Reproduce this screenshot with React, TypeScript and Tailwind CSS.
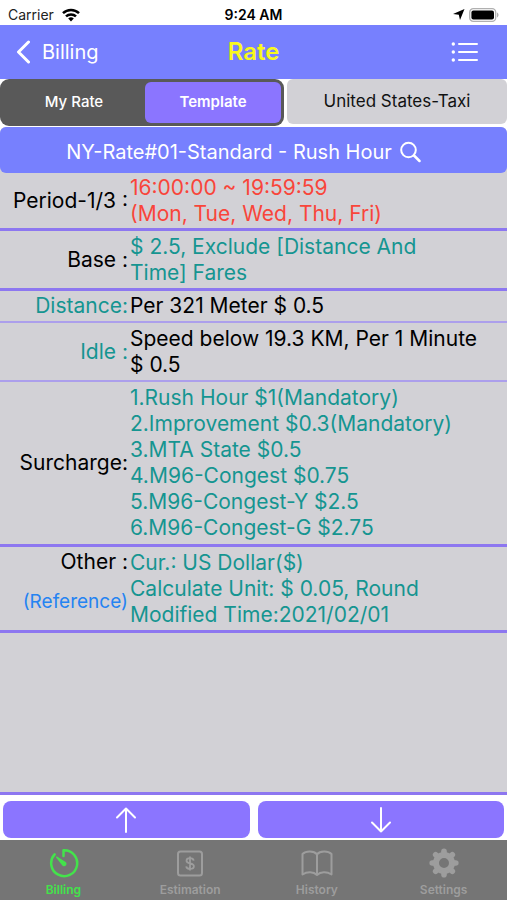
import React, { ReactNode } from "react";

type RateRow = {
  label: string;
  labelColor?: string;
  lines: string[];
  color: string;
  height: string;
  border: string;
  link?: string;
};

const STRONG_LINE = "border-b-[3px] border-[#8d77f0]";
const LIGHT_LINE = "border-b-2 border-[#ac9fec]";

const rows: RateRow[] = [
  {
    label: "Period-1/3 :",
    lines: ["16:00:00 ~ 19:59:59", "(Mon, Tue, Wed, Thu, Fri)"],
    color: "text-[#f9453a]",
    height: "h-[58px]",
    border: STRONG_LINE,
  },
  {
    label: "Base :",
    lines: ["$ 2.5, Exclude [Distance And", "Time] Fares"],
    color: "text-[#159591]",
    height: "h-[60px]",
    border: STRONG_LINE,
  },
  {
    label: "Distance:",
    labelColor: "text-[#159591]",
    lines: ["Per 321 Meter $ 0.5"],
    color: "text-black",
    height: "h-[32px]",
    border: LIGHT_LINE,
  },
  {
    label: "Idle :",
    labelColor: "text-[#159591]",
    lines: ["Speed below 19.3 KM, Per 1 Minute", "$ 0.5"],
    color: "text-black",
    height: "h-[59px]",
    border: LIGHT_LINE,
  },
  {
    label: "Surcharge:",
    lines: [
      "1.Rush Hour $1(Mandatory)",
      "2.Improvement $0.3(Mandatory)",
      "3.MTA State $0.5",
      "4.M96-Congest $0.75",
      "5.M96-Congest-Y $2.5",
      "6.M96-Congest-G $2.75",
    ],
    color: "text-[#159591]",
    height: "h-[165px]",
    border: STRONG_LINE,
  },
  {
    label: "Other :",
    lines: ["Cur.: US Dollar($)", "Calculate Unit: $ 0.05, Round", "Modified Time:2021/02/01"],
    color: "text-[#159591]",
    height: "h-[86px]",
    border: STRONG_LINE,
    link: "(Reference)",
  },
];

function StatusBar() {
  return (
    <div className="grid h-[25px] grid-cols-3 items-center bg-white px-2 pt-1 text-sm text-black">
      <div className="flex items-center gap-2 text-[#222]">
        Carrier
        <svg width="18" height="14" viewBox="0 0 18 14" aria-hidden="true">
          <g fill="none" stroke="#000" strokeWidth="2.5">
            <path d="M1 5.2a11.4 11.4 0 0 1 16 0" />
            <path d="M4 8.4a7.2 7.2 0 0 1 10 0" />
          </g>
          <path d="M9 13.4 6.2 10.6a4 4 0 0 1 5.6 0Z" />
        </svg>
      </div>
      <div className="text-center font-semibold">9:24 AM</div>
      <div className="flex items-center justify-end gap-1">
        <svg width="12" height="11" viewBox="0 0 12 11" aria-hidden="true">
          <path d="M11.500 0 7 11 5.800 5.800 0 5Z" />
        </svg>
        <svg width="30" height="14" viewBox="0 0 30 14" aria-hidden="true">
          <rect x=".7" y=".7" width="26" height="12.6" rx="3.6" fill="#fff" stroke="#b0b0b0" strokeWidth="1.3" />
          <rect x="2.4" y="2.4" width="22.6" height="9.2" rx="2" />
          <path d="M28 4.6c2 .7 2 4.1 0 4.8Z" fill="#b0b0b0" />
        </svg>
      </div>
    </div>
  );
}

function NavBar() {
  return (
    <header className="grid h-[54px] grid-cols-3 items-center bg-[#7780fe] text-white">
      <button type="button" className="flex items-center gap-3 pl-4 text-xl">
        <svg width="14" height="24" viewBox="0 0 14 24" fill="none" stroke="currentColor" strokeWidth="3" strokeLinecap="round" strokeLinejoin="round" aria-hidden="true">
          <path d="M12.5 2 2.5 12l10 10" />
        </svg>
        Billing
      </button>
      <h1 className="text-center text-2xl font-semibold text-[#f8f81c]">Rate</h1>
      <button type="button" aria-label="Rate list" className="justify-self-end pr-7">
        <svg width="28" height="20" viewBox="0 0 28 20" fill="none" stroke="currentColor" strokeWidth="2" strokeLinecap="round" aria-hidden="true">
          <path d="M8 2h18M8 10h18M8 18h18" />
          <path d="M2.3 2h.01M2.3 10h.01M2.3 18h.01" strokeWidth="3.4" />
        </svg>
      </button>
    </header>
  );
}

function RateFilter() {
  return (
    <div className="grid grid-cols-[284fr_220fr] gap-[3px] pb-px">
      <div className="grid h-[47px] grid-cols-[142fr_136fr] rounded-[9px] bg-[#595959] p-[3px] text-[15px] font-medium text-white">
        <button type="button">My Rate</button>
        <button type="button" className="rounded-md bg-[#8b75ff] font-semibold">
          Template
        </button>
      </div>
      <button type="button" className="h-[45px] rounded-md bg-[#d2d1d6] text-[17px] text-[#111]">
        United States-Taxi
      </button>
    </div>
  );
}

function RateTable() {
  return (
    <table className="w-full border-separate border-spacing-0 text-[21px] leading-[26px]">
      <tbody>
        {rows.map((row) => (
          <tr key={row.label} className={row.height}>
            <th
              scope="row"
              className={`w-[128px] p-0 text-right font-normal whitespace-nowrap ${row.link ? "pt-[2px] align-top" : "align-middle"} ${row.labelColor ?? "text-black"} ${row.border}`}
            >
              {row.label}
              {row.link && (
                <a href="#reference" className="mt-[14px] block text-[19px] text-[#2583f2]">
                  {row.link}
                </a>
              )}
            </th>
            <td className={`py-0 pr-0 pl-[2px] ${row.color} ${row.border}`}>
              {row.lines.map((line) => (
                <div key={line}>{line}</div>
              ))}
            </td>
          </tr>
        ))}
      </tbody>
    </table>
  );
}

function Pager() {
  const button = "flex h-[37px] items-center justify-center rounded-lg bg-[#8b75ff] text-white";
  return (
    <div className="grid grid-cols-2 gap-2 px-[3px] pt-[6px] pb-[2px]">
      <button type="button" aria-label="Previous rate" className={button}>
        <svg width="22" height="26" viewBox="0 0 22 26" fill="none" stroke="currentColor" strokeWidth="2" strokeLinecap="round" strokeLinejoin="round" aria-hidden="true">
          <path d="M11 25V1.5M2 10.5l9-9 9 9" />
        </svg>
      </button>
      <button type="button" aria-label="Next rate" className={button}>
        <svg width="22" height="26" viewBox="0 0 22 26" fill="none" stroke="currentColor" strokeWidth="2" strokeLinecap="round" strokeLinejoin="round" aria-hidden="true">
          <path d="M11 1v23.5M2 15.5l9 9 9-9" />
        </svg>
      </button>
    </div>
  );
}

function TabItem({ label, active, children }: { label: string; active?: boolean; children: ReactNode }) {
  return (
    <a
      href={`#${label.toLowerCase()}`}
      className={`flex flex-col items-center gap-1 pt-2 text-xs font-semibold ${active ? "text-[#43e34b]" : "text-[#9d9d9d]"}`}
    >
      <svg width="32" height="30" viewBox="0 0 32 30" fill="none" stroke="currentColor" strokeWidth="2" aria-hidden="true">
        {children}
      </svg>
      {label}
    </a>
  );
}

function TabBar() {
  const teeth = [0, 45, 90, 135, 180, 225, 270, 315];
  return (
    <nav className="grid h-[60px] grid-cols-4 bg-[#757575]">
      <TabItem label="Billing" active>
        <path d="M16.500 8V2.200A13 13 0 1 1 7.600 6.400" strokeWidth="2.5" strokeLinecap="round" strokeLinejoin="round" />
        <path d="M10 8.600c-.6-.5-1.400.2-.9.900l6 7.700a2.400 2.400 0 1 0 3.200-3.400Z" fill="currentColor" stroke="none" />
      </TabItem>
      <TabItem label="Estimation">
        <rect x="4" y="3.5" width="24" height="24" rx="2.5" />
        <path d="M19.700 12.600c-.3-1.500-1.700-2.400-3.700-2.400-2.100 0-3.500 1-3.500 2.500 0 3.700 7.400 1.700 7.400 5.500 0 1.700-1.600 2.700-3.800 2.700-2.300 0-3.700-1-3.900-2.600M16 8.500v14" strokeWidth="1.8" />
      </TabItem>
      <TabItem label="History">
        <path d="M16 6.300C13 2.500 5 2.500 1.500 6v20.500c4.500-3 11-3 14.500.5 3.500-3.500 10-3.500 14.500-.5V6C27 2.500 19 2.500 16 6.300ZM16 6.300V27" strokeLinejoin="round" />
      </TabItem>
      <TabItem label="Settings">
        <circle cx="16" cy="15" r="8" strokeWidth="6" />
        {teeth.map((angle) => (
          <path key={angle} d="M16 6V3.200" strokeWidth="5.6" strokeLinecap="round" transform={`rotate(${angle} 16 15)`} />
        ))}
      </TabItem>
    </nav>
  );
}

export default function App() {
  return (
    <div className="flex min-h-screen flex-col bg-white font-['Inter','Liberation_Sans',sans-serif]">
      <StatusBar />
      <NavBar />
      <RateFilter />
      <main className="flex flex-1 flex-col">
        <div className={`flex-1 rounded-t-md bg-[#d2d1d6] ${STRONG_LINE}`}>
          <button type="button" className="flex h-[46px] w-full items-center justify-center gap-2 rounded-md bg-[#7780fe] pt-1 pr-5 text-xl text-white">
            NY-Rate#01-Standard - Rush Hour
            <svg width="21" height="22" viewBox="0 0 21 22" fill="none" stroke="currentColor" strokeWidth="2" strokeLinecap="round" aria-hidden="true">
              <circle cx="8.5" cy="9" r="7.3" />
              <path d="m14 14.500 5.500 5.500" strokeWidth="2.5" />
            </svg>
          </button>
          <RateTable />
        </div>
        <Pager />
      </main>
      <TabBar />
    </div>
  );
}
